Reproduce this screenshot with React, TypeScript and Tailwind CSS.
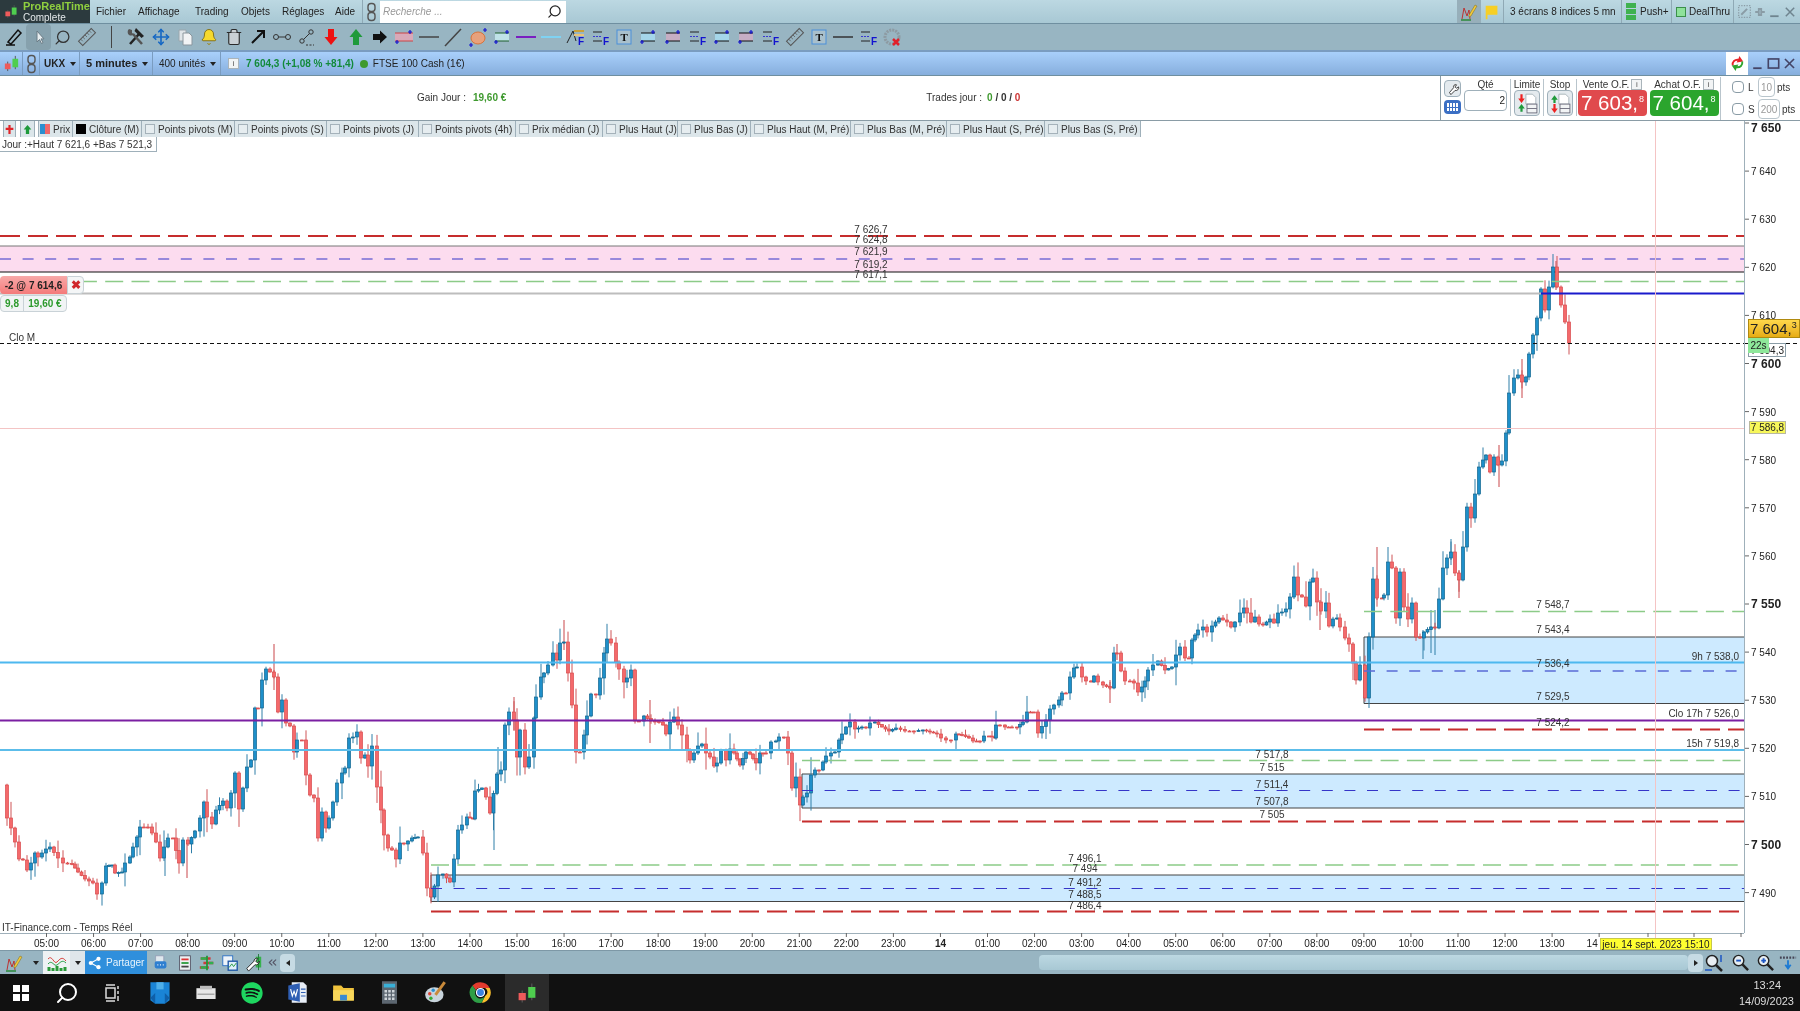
import type { ReactNode } from 'react'
import { Bell, ChevronsLeft, Move, Search, Trash2 } from 'lucide-react'
import { FaSpotify } from 'react-icons/fa'

// close of each candle, read off the chart as [x, y] in page pixels
const PATH: number[][] = [
  [3,785],[7,818],[11,828],[15,842],[19,859],[23,860],[27,870],[31,863],[35,853],[38,857],[46,849],[50,847],[58,858],[63,863],[72,864],[78,872],[85,879],[93,883],[97,894],[102,883],[106,866],[112,865],[115,873],[122,872],[125,863],[130,857],[133,847],[137,837],[140,827],[148,827],[152,833],[156,842],[160,858],[164,847],[168,838],[173,838],[179,863],[183,840],[188,844],[195,831],[200,818],[204,802],[207,817],[212,824],[216,810],[223,801],[227,808],[231,793],[235,773],[239,809],[243,788],[247,767],[251,760],[255,708],[258,708],[262,680],[266,669],[270,672],[274,677],[278,712],[282,700],[286,723],[290,726],[294,752],[297,740],[302,740],[306,775],[310,795],[314,798],[318,838],[322,812],[326,828],[329,818],[333,802],[337,783],[342,773],[345,768],[349,738],[353,737],[357,732],[361,758],[365,755],[368,766],[372,746],[377,787],[381,810],[384,835],[388,848],[392,850],[396,859],[400,843],[404,844],[412,838],[418,837],[423,853],[427,888],[431,897],[438,875],[443,874],[450,882],[454,859],[458,830],[462,825],[467,817],[473,819],[475,791],[482,788],[486,797],[490,813],[497,774],
  [501,770],[505,725],[509,712],[514,720],[517,757],[520,730],[525,767],[529,757],[534,718],[536,697],[541,677],[544,673],[548,665],[553,653],[557,660],[560,643],[564,642],[568,673],[572,705],[576,752],[580,752],[584,735],[587,716],[591,694],[596,695],[600,678],[604,653],[607,639],[611,643],[616,662],[619,669],[624,682],[627,678],[631,670],[635,721],[639,721],[644,716],[651,721],[659,722],[663,725],[666,734],[670,722],[674,717],[678,725],[682,735],[687,750],[690,760],[694,753],[698,746],[702,744],[706,753],[710,757],[714,766],[717,763],[721,750],[726,760],[730,749],[734,753],[740,765],[746,752],[750,754],[756,763],[760,753],[766,753],[771,742],[776,741],[779,737],[784,737],[788,753],[792,788],[796,777],[800,805],[803,797],[807,793],[811,775],[815,770],[819,770],[823,762],[826,756],[831,753],[835,752],[839,740],[842,734],[846,727],[850,722],[855,729],[862,727],[866,728],[870,723],[875,722],[882,727],[889,731],[896,728],[905,731],[914,731],[923,730],[937,734],[941,738],[946,740],[951,740],[956,734],[962,735],[969,738],[973,741],[980,741],[984,736],[989,736],[995,738],[996,725],[1000,725],[1005,727],[1012,727],[1017,727],[1023,722],[1027,712],[1034,712],[1038,733],
  [1046,720],[1050,709],[1054,705],[1059,700],[1062,693],[1066,693],[1070,677],[1074,668],[1077,667],[1082,677],[1086,681],[1091,682],[1094,676],[1098,682],[1103,685],[1110,688],[1114,653],[1117,653],[1121,671],[1125,681],[1130,681],[1134,683],[1138,692],[1142,687],[1145,681],[1148,670],[1153,665],[1158,661],[1165,670],[1172,667],[1176,655],[1180,647],[1185,658],[1189,658],[1192,640],[1198,630],[1203,627],[1207,632],[1212,626],[1219,618],[1227,622],[1231,627],[1235,622],[1240,613],[1244,608],[1247,613],[1251,622],[1255,617],[1259,624],[1263,625],[1270,619],[1274,623],[1278,613],[1282,612],[1286,609],[1290,597],[1294,577],[1298,595],[1302,597],[1306,606],[1310,582],[1313,578],[1317,602],[1321,611],[1326,603],[1329,626],[1333,619],[1337,618],[1340,627],[1345,638],[1349,644],[1353,663],[1356,680],[1360,665],[1365,698],[1369,637],[1373,579],[1377,598],[1382,598],[1384,595],[1388,562],[1392,568],[1396,618],[1400,572],[1404,607],[1408,619],[1412,603],[1416,637],[1420,638],[1424,632],[1431,627],[1435,628],[1439,599],[1443,568],[1447,558],[1451,552],[1455,573],[1459,580],[1463,547],[1467,507],[1471,518],[1475,494],[1479,467],[1483,460],[1486,455],[1490,472],[1494,457],[1498,465],[1502,461],[1506,433],[1509,393],[1514,378],[1518,375],[1522,382],[1526,377],[1529,354],[1533,335],[1537,318],[1541,289],[1545,310],[1549,287],[1553,267],[1557,287],[1561,305],[1565,322],[1569,343],
]

// the long wicks that stand out on the chart: x, y1, y2, red?
const WICKS: [number, number, number, boolean][] = [
  [274,644,690,true],[187,840,878,true],[165,840,876,false],[494,810,850,false],[498,747,790,false],[564,620,650,true],[514,697,730,true],[650,700,743,true],[1377,547,600,true],[1110,680,703,true],[1117,644,660,true],[1320,600,630,true],[1423,630,659,false],[1435,610,655,false],[1431,610,653,false],[1459,570,598,true],[1451,539,560,false],[1556,261,290,true],[1522,359,398,true],[1499,445,487,true],
]

const UP = '#1e8fca'
const DOWN = '#f4696b'

function rnd(i: number) {
  const v = Math.sin(i * 12.9898) * 43758.5453
  return v - Math.floor(v)
}

function buildCandles() {
  const out: { x: number; open: number; close: number; hi: number; lo: number }[] = []
  for (let p = 1; p < PATH.length; p++) {
    const [x0, y0] = PATH[p - 1]
    const [x1, y1] = PATH[p]
    const n = Math.max(1, Math.round((x1 - x0) / 3.92))
    for (let k = 1; k <= n; k++) {
      const open = y0 + ((y1 - y0) * (k - 1)) / n
      const close = y0 + ((y1 - y0) * k) / n
      const i = out.length
      const scale = 0.25 + Math.min(Math.abs(close - open) / 10, 1)
      out.push({
        x: x0 + ((x1 - x0) * k) / n,
        open,
        close,
        hi: Math.min(open, close) - (1 + rnd(i) * rnd(i) * 14) * scale,
        lo: Math.max(open, close) + (1 + rnd(i + 500) * rnd(i + 500) * 14) * scale,
      })
    }
  }
  return out
}

const candles = buildCandles()

const PRICES = [7650,7640,7630,7620,7610,7600,7590,7580,7570,7560,7550,7540,7530,7520,7510,7500,7490]
const HOURS = ['05:00','06:00','07:00','08:00','09:00','10:00','11:00','12:00','13:00','14:00','15:00','16:00','17:00','18:00','19:00','20:00','21:00','22:00','23:00','14','01:00','02:00','03:00','04:00','05:00','06:00','07:00','08:00','09:00','10:00','11:00','12:00','13:00','14']

const priceY = (p: number) => 604 + (7550 - p) * 4.81

const LABELS: [string, number, number][] = [
  ['7 626,7',871,229],['7 624,8',871,239],['7 621,9',871,251],['7 619,2',871,264],['7 617,1',871,274],
  ['7 548,7',1553,604],['7 543,4',1553,629],['7 536,4',1553,663],['7 529,5',1553,696],['7 524,2',1553,722],
  ['7 517,8',1272,754],['7 515',1272,767],['7 511,4',1272,784],['7 507,8',1272,801],['7 505',1272,814],
  ['7 496,1',1085,858],['7 494',1085,868],['7 491,2',1085,882],['7 488,5',1085,894],['7 486,4',1085,905],
]

function Dash({ x, y, color, w, dash }: { x: number; y: number; color: string; w: number; dash: string }) {
  return <line x1={x} x2={1744} y1={y} y2={y} stroke={color} strokeWidth={w} strokeDasharray={dash} />
}

function Box({ x, top, bottom, fill, edge }: { x: number; top: number; bottom: number; fill: string; edge?: string }) {
  return (
    <g>
      <rect x={x} y={top} width={1744 - x} height={bottom - top} fill={fill} />
      <line x1={x} x2={1744} y1={top} y2={top} stroke={edge ?? '#444'} strokeWidth={1} />
      <line x1={x} x2={1744} y1={bottom} y2={bottom} stroke={edge ?? '#444'} strokeWidth={1} />
    </g>
  )
}

function Chart() {
  return (
    <svg width={1800} height={829} viewBox="0 121 1800 829" className="block" fontFamily="'Liberation Sans', Arial, sans-serif">
      <rect x={0} y={121} width={1800} height={829} fill="#fff" />

      <rect x={0} y={246} width={1744} height={26} fill="#fcdcef" />
      <line x1={0} x2={1744} y1={246} y2={246} stroke="#777" />
      <line x1={0} x2={1744} y1={272} y2={272} stroke="#111" />
      <Box x={1364} top={637} bottom={703.5} fill="#cdeaff" />
      <Box x={802} top={774} bottom={808} fill="#cdeaff" />
      <Box x={431} top={875} bottom={901.5} fill="#cdeaff" />
      <line x1={1364} x2={1364} y1={637} y2={703.5} stroke="#444" />
      <line x1={802} x2={802} y1={774} y2={808} stroke="#444" />
      <line x1={431} x2={431} y1={875} y2={901.5} stroke="#444" />

      {WICKS.map(([x, a, b, red], i) => (
        <line key={i} x1={x} x2={x} y1={a} y2={b} stroke={red ? '#c9474a' : '#2f7ea8'} />
      ))}
      {candles.map((c, i) => {
        const up = c.close < c.open
        const top = Math.min(c.open, c.close)
        const h = Math.max(1, Math.abs(c.close - c.open))
        return (
          <g key={i}>
            <line x1={c.x} x2={c.x} y1={c.hi} y2={c.lo} stroke={up ? '#2f7ea8' : '#cf5557'} />
            <rect x={c.x - 1.5} y={top} width={3} height={h} fill={up ? UP : DOWN} stroke={up ? '#11668f' : '#d94a4c'} strokeWidth={0.7} />
          </g>
        )
      })}

      <Dash x={0} y={236} color="#c62d2d" w={2} dash="20 8" />
      <Dash x={0} y={259} color="#3535c8" w={1} dash="11 11.6" />
      <Dash x={0} y={281.5} color="#8ccb88" w={1.5} dash="18 8.3" />
      <line x1={0} x2={1541} y1={293.5} y2={293.5} stroke="#bdbdbd" strokeWidth={2} />
      <line x1={1541} x2={1744} y1={293.5} y2={293.5} stroke="#1a1acc" strokeWidth={2} />
      <Dash x={0} y={343.5} color="#111" w={1} dash="4 3" />
      <line x1={1744} x2={1800} y1={343.5} y2={343.5} stroke="#111" strokeDasharray="4 3" />

      <line x1={0} x2={1744} y1={662.5} y2={662.5} stroke="#4db8ef" strokeWidth={2} />
      <line x1={0} x2={1744} y1={720.5} y2={720.5} stroke="#7a1fa2" strokeWidth={2} />
      <line x1={0} x2={1744} y1={750} y2={750} stroke="#5cbdea" strokeWidth={2} />

      <Dash x={1364} y={611.5} color="#8ccb88" w={1.5} dash="18 8.3" />
      <Dash x={1364} y={671} color="#5a6bd6" w={1.5} dash="11 11.6" />
      <Dash x={1364} y={729.5} color="#c62d2d" w={2} dash="20 8" />
      <Dash x={802} y={760.5} color="#8ccb88" w={1.5} dash="18 8.3" />
      <Dash x={802} y={790.5} color="#3535c8" w={1} dash="11 11.6" />
      <Dash x={802} y={821.5} color="#c62d2d" w={2} dash="20 8" />
      <Dash x={431} y={865} color="#8ccb88" w={1.5} dash="18 8.3" />
      <Dash x={431} y={888.5} color="#3535c8" w={1} dash="11 11.6" />
      <Dash x={431} y={911.5} color="#c62d2d" w={2} dash="20 8" />

      <line x1={0} x2={1744} y1={428.5} y2={428.5} stroke="#f4c4c4" />
      <line x1={1655.5} x2={1655.5} y1={121} y2={950} stroke="#f4c4c4" />

      {LABELS.map(([t, x, y]) => (
        <text key={t} x={x} y={y + 3.5} textAnchor="middle" fontSize={10} fill="#333">{t}</text>
      ))}
      <text x={1739} y={659.5} textAnchor="end" fontSize={10} fill="#333">9h 7 538,0</text>
      <text x={1739} y={716.5} textAnchor="end" fontSize={10} fill="#333">Clo 17h 7 526,0</text>
      <text x={1739} y={746.5} textAnchor="end" fontSize={10} fill="#333">15h 7 519,8</text>
      <text x={9} y={341} fontSize={10} fill="#333">Clo M</text>
      <text x={2} y={931} fontSize={10} fill="#333">IT-Finance.com - Temps Réel</text>

      <line x1={1744.5} x2={1744.5} y1={121} y2={933} stroke="#9fb0ba" />
      <line x1={0} x2={1744} y1={933.5} y2={933.5} stroke="#9fb0ba" />
      {PRICES.map((p) => {
        const bold = p % 50 === 0
        const y = priceY(p)
        return (
          <g key={p}>
            <line x1={1745} x2={1749} y1={y} y2={y} stroke="#666" />
            <text x={1751} y={(p === 7650 ? 128 : y) + 4} fontSize={bold ? 12 : 10} fontWeight={bold ? 700 : 400} fill="#222">
              {String(p)[0]} {String(p).slice(1)}
            </text>
          </g>
        )
      })}

      {HOURS.map((h, i) => {
        const x = 46.5 + 47.05 * i
        const last = i === HOURS.length - 1
        return (
          <g key={i}>
            <line x1={x} x2={x} y1={933} y2={937} stroke="#666" />
            <text x={last ? x - 7 : x} y={947} textAnchor="middle" fontSize={10} fontWeight={h === '14' && !last ? 700 : 400} fill="#222">{h}</text>
          </g>
        )
      })}
      <line x1={1648} x2={1648} y1={933} y2={937} stroke="#666" />
      <line x1={1694} x2={1694} y1={933} y2={937} stroke="#666" />
      <line x1={1741} x2={1741} y1={933} y2={937} stroke="#666" />
    </svg>
  )
}

function Ico({ children, size = 20 }: { children: ReactNode; size?: number }) {
  return <svg width={size} height={size} viewBox="0 0 20 20" fill="none">{children}</svg>
}

const Plus = ({ x, y }: { x: number; y: number }) => (
  <path d={`M${x - 2} ${y}h4M${x} ${y - 2}v4`} stroke="#1212d0" strokeWidth={1.2} />
)
const F = () => <text x={13} y={18} fontSize={10} fontWeight={700} fill="#1212d0" fontFamily="'Liberation Sans', sans-serif">F</text>
const T = () => (
  <>
    <rect x={3} y={3} width={14} height={14} fill="#a9c0cc" stroke="#4a90d9" />
    <text x={6.5} y={14} fontSize={11} fontWeight={700} fill="#111" fontFamily="'Liberation Serif', serif">T</text>
  </>
)
const Channel = ({ fill, edge }: { fill: string; edge: string }) => (
  <>
    <rect x={3} y={6} width={14} height={8} fill={fill} />
    <path d="M3 6h14M3 14h14" stroke={edge} strokeWidth={1.2} />
    <Plus x={15} y={5} />
    <Plus x={4} y={15} />
  </>
)
const Lines = () => (
  <>
    <path d="M3 5h9M3 14h9" stroke="#222" strokeWidth={1.2} />
    <path d="M3 9.5h9" stroke="#3a3ad0" strokeWidth={1.2} strokeDasharray="2 1" />
    <F />
  </>
)
const Ruler = () => (
  <g transform="rotate(-45 10 10)">
    <rect x={1} y={7} width={18} height={6} fill="none" stroke="#555" />
    <path d="M4 7v3M7 7v3M10 7v3M13 7v3M16 7v3" stroke="#555" strokeWidth={0.7} />
  </g>
)

const TOOLS: ReactNode[] = [
  <Ico key="a"><path d="M4 15 14 3l3 3L7 17zM2 18h9" stroke="#111" strokeWidth={1.5} /></Ico>,
  <Ico key="b"><path d="M8 4v11l2.5-2.5 2 4 1.5-.8-2-3.8H15z" fill="#e8eef0" stroke="#6b7c86" /></Ico>,
  <Search key="c" size={17} color="#333" strokeWidth={1.8} className="-scale-x-100" />,
  <Ico key="d"><Ruler /></Ico>,
  <div key="e" className="h-[22px] w-px bg-[#444]" />,
  <Ico key="f">
    <path d="m4 17 9-10" stroke="#222" strokeWidth={2.5} />
    <path d="m10 1 8 8-2.500 2-7-7z" fill="#222" />
    <path d="m16 17-9-10" stroke="#555" strokeWidth={2.500} />
    <path d="M3 2a4 4 0 0 0 0 6 4 4 0 0 0 5-1L6 6V3z" fill="#555" />
  </Ico>,
  <Move key="g" size={18} color="#1668c4" strokeWidth={2.2} />,
  <Ico key="h"><path d="M4 3h7v11H4z" fill="#dfe5e8" stroke="#9aa6ad" /><path d="M8 6h6l3 3v9H8z" fill="#f2f4f5" stroke="#8a969d" /></Ico>,
  <Bell key="i" size={18} color="#7d6a12" fill="#f6d92e" strokeWidth={1.2} />,
  <Trash2 key="j" size={18} color="#2a2a2a" fill="#c9d0d4" strokeWidth={1.5} />,
  <Ico key="k"><path d="M4 16 15 5M9 4h7v7" stroke="#111" strokeWidth={2} /></Ico>,
  <Ico key="l"><circle cx={4} cy={10} r={2.5} stroke="#333" /><circle cx={16} cy={10} r={2.5} stroke="#333" /><path d="M6.5 10h7" stroke="#333" /></Ico>,
  <Ico key="m"><circle cx={14} cy={5} r={2.2} stroke="#333" /><circle cx={5} cy={14} r={2.2} stroke="#333" /><path d="m6.5 12.5 6-6" stroke="#333" /><path d="M9 18h8" stroke="#333" strokeDasharray="2 1.5" /></Ico>,
  <Ico key="n"><path d="M7 2h6v8h3.5L10 18 3.5 10H7z" fill="#ee1111" /></Ico>,
  <Ico key="o"><path d="M10 2l6.5 8H13v8H7v-8H3.500z" fill="#1f9a3a" /></Ico>,
  <Ico key="p"><path d="M3 7h7V3.500l7 6.500-7 6.500V13H3z" fill="#111" /></Ico>,
  <Ico key="q"><rect x={1} y={6} width={18} height={8} fill="#d9a9b8" /><path d="M1 6h18M1 14h18" stroke="#c44" /><Plus x={16} y={5} /><Plus x={3} y={15} /></Ico>,
  <Ico key="r"><path d="M0 10h20" stroke="#444" strokeWidth={1.5} /></Ico>,
  <Ico key="s"><path d="M2 19 18 2" stroke="#444" strokeWidth={1.5} /></Ico>,
  <Ico key="t"><ellipse cx={10} cy={11} rx={7} ry={6} fill="#e8a17c" stroke="#d9733a" /><Plus x={17} y={3} /><Plus x={3} y={18} /></Ico>,
  <Ico key="u"><Channel fill="#bfe2e8" edge="#1d5e2a" /></Ico>,
  <Ico key="v"><path d="M0 10h20" stroke="#7a1fc0" strokeWidth={2} /></Ico>,
  <Ico key="w"><path d="M0 10h20" stroke="#7fd2f2" strokeWidth={2} /></Ico>,
  <Ico key="x"><path d="M2 16 8 4l3 10" stroke="#222" /><path d="M9 4h10" stroke="#c9a13a" strokeWidth={2} /><path d="M9 8h10" stroke="#e8c27a" strokeWidth={2} /><F /></Ico>,
  <Ico key="y"><Lines /></Ico>,
  <Ico key="z"><T /></Ico>,
  <Ico key="a1"><Channel fill="#a5d6ea" edge="#111" /></Ico>,
  <Ico key="a2"><Channel fill="#c6aec4" edge="#111" /></Ico>,
  <Ico key="a3"><Lines /></Ico>,
  <Ico key="a4"><Channel fill="#a5d6ea" edge="#111" /></Ico>,
  <Ico key="a5"><Channel fill="#c6aec4" edge="#111" /></Ico>,
  <Ico key="a6"><Lines /></Ico>,
  <Ico key="a7"><Ruler /></Ico>,
  <Ico key="a8"><T /></Ico>,
  <Ico key="a9"><path d="M0 10h20" stroke="#333" strokeWidth={1.5} /></Ico>,
  <Ico key="a10"><Lines /></Ico>,
  <Ico key="a11"><circle cx={10} cy={10} r={7} stroke="#8d9aa2" strokeWidth={3} strokeDasharray="2 1" /><path d="m11 12 6 6m0-6-6 6" stroke="#e0202a" strokeWidth={2.5} /></Ico>,
]

const Candles = ({ size = 20 }: { size?: number }) => (
  <svg width={size} height={size} viewBox="0 0 20 20">
    <path d="M6 8v10M14 2v14" stroke="#555" strokeWidth={1} />
    <rect x={3} y={10} width={6} height={6} fill="#ef5b5b" />
    <rect x={11} y={5} width={6} height={9} fill="#4fce4f" />
  </svg>
)

const Chain = () => (
  <svg width={11} height={20} viewBox="0 0 11 20" fill="none">
    <rect x={2} y={1.500} width={7} height={8} rx={3} stroke="#555" strokeWidth={1.4} />
    <rect x={2} y={10.500} width={7} height={8} rx={3} stroke="#555" strokeWidth={1.4} />
  </svg>
)

const Caret = () => (
  <span className="inline-block h-0 w-0 border-x-[3px] border-t-[4px] border-x-transparent border-t-[#222]" />
)

const InfoIcon = () => (
  <span className="flex h-[11px] w-[11px] items-center justify-center border border-[#aab4ba] bg-[#f2f4f5] text-[8px] leading-none text-[#555]">i</span>
)

function MenuBar() {
  return (
    <div className="flex h-[24px] shrink-0 items-center border-b border-[#6f8fa0] bg-gradient-to-b from-[#bcd8e2] to-[#a8c8d4] text-[10px] text-[#222]">
      <div className="flex h-full w-[90px] items-center gap-[4px] bg-[#2c3a3e] pl-[3px]">
        <Candles size={17} />
        <div className="leading-[11px]">
          <div className="text-[11px] font-bold text-[#8fcf3f]">ProRealTime</div>
          <div className="text-[10px] text-[#e3e8ea]">Complete</div>
        </div>
      </div>
      <span className="ml-[6px] w-[42px]">Fichier</span>
      <span className="w-[57px]">Affichage</span>
      <span className="w-[46px]">Trading</span>
      <span className="w-[41px]">Objets</span>
      <span className="w-[53px]">Réglages</span>
      <span className="w-[27px]">Aide</span>
      <div className="flex h-full w-[18px] items-center justify-center border-l border-[#8fa9b5]"><Chain /></div>
      <div className="flex h-[22px] w-[186px] items-center justify-between bg-white pl-[3px] pr-[4px]">
        <span className="italic text-[#999]">Recherche ...</span>
        <Search size={15} color="#222" className="-scale-x-100" />
      </div>
      <div className="flex-1" />
      <div className="flex h-full w-[24px] items-center justify-center bg-[#97afba]">
        <Ico size={20}><path d="M3 17 5 6l3 8 2-6 1 9" stroke="#b33" /><path d="m10 13 6-10 2 1-6 10-2 1z" fill="#f2c93a" stroke="#7a6a20" strokeWidth={0.5} /><path d="M2 18h10" stroke="#2a8a3a" strokeWidth={1.5} /></Ico>
      </div>
      <div className="flex h-full w-[23px] items-center justify-center border-r border-[#8fa9b5]">
        <Ico size={18}><path d="M3 3h13v10H5v5H3z" fill="#f7cf25" /></Ico>
      </div>
      <span className="w-[118px] border-r border-[#8fa9b5] pl-[6px] leading-[23px]">3 écrans 8 indices 5 mn</span>
      <div className="flex h-full w-[50px] items-center gap-[4px] border-r border-[#8fa9b5] pl-[4px]">
        <span className="flex h-[18px] w-[10px] flex-col gap-px">
          <span className="flex-1 bg-[#3fb24f]" /><span className="flex-1 bg-[#3fb24f]" /><span className="flex-1 bg-[#3fb24f]" />
        </span>
        Push+
      </div>
      <div className="flex h-full w-[62px] items-center gap-[3px] border-r border-[#8fa9b5] pl-[4px]">
        <span className="h-[10px] w-[10px] border border-[#3b8f4a] bg-[#8ee29a]" />
        DealThru
      </div>
      <div className="flex w-[66px] items-center justify-around px-[2px]">
        <Ico size={13}><rect x={1} y={1} width={18} height={18} stroke="#8a9ca6" strokeDasharray="2 2" strokeWidth={2} /><path d="m5 15 9-9" stroke="#8a9ca6" strokeWidth={3} /></Ico>
        <Ico size={12}><path d="M2 10h6M8 5h4v10H8zM12 10h6" stroke="#8a9ca6" strokeWidth={3} /></Ico>
        <Ico size={12}><path d="M2 17h14" stroke="#6f848f" strokeWidth={3} /></Ico>
        <Ico size={12}><path d="m3 3 14 14M17 3 3 17" stroke="#6f848f" strokeWidth={2.5} /></Ico>
      </div>
    </div>
  )
}

function ToolBar() {
  return (
    <div className="flex h-[28px] shrink-0 items-center border-b-2 border-[#7a9cc0] bg-[#98b5c2] pl-[2px]">
      {TOOLS.map((t, i) => (
        <div key={i} className={`flex h-[26px] w-[24.4px] shrink-0 items-center justify-center ${i === 1 ? 'rounded-sm bg-[#86a1ad]' : ''}`}>
          {t}
        </div>
      ))}
    </div>
  )
}

function SymbolBar() {
  return (
    <div className="flex h-[24px] shrink-0 items-center border-b border-[#6f8fa0] bg-gradient-to-b from-[#a9d0fb] to-[#86aedd] text-[10px] text-[#222]">
      <div className="flex h-full w-[23px] items-center justify-center border-r border-[#7a9cc0]"><Candles size={19} /></div>
      <div className="flex h-full w-[17px] items-center justify-center border-r border-[#7a9cc0]"><Chain /></div>
      <div className="flex h-full w-[40px] items-center gap-[5px] border-r border-[#7a9cc0] pl-[4px] text-[10px] font-bold">UKX <Caret /></div>
      <div className="flex h-full w-[73px] items-center gap-[5px] border-r border-[#7a9cc0] pl-[6px] text-[11px] font-bold">5 minutes <Caret /></div>
      <div className="flex h-full w-[68px] items-center gap-[5px] border-r border-[#7a9cc0] pl-[6px]">400 unités <Caret /></div>
      <div className="ml-[7px]"><InfoIcon /></div>
      <span className="ml-[7px] font-bold text-[#138a3a]">7 604,3 (+1,08 % +81,4)</span>
      <span className="ml-[6px] h-[8px] w-[8px] rounded-full bg-[#3f9a2f]" />
      <span className="ml-[5px]">FTSE 100 Cash (1€)</span>
      <div className="flex-1" />
      <div className="flex h-full w-[22px] items-center justify-center bg-white">
        <Ico size={19}>
          <path d="M4 12a6 6 0 0 1 7-7l1-3 4 6-7 1 1-2a4 4 0 0 0-4 5z" fill="#e8262a" />
          <path d="M16 8a6 6 0 0 1-7 7l-1 3-4-6 7-1-1 2a4 4 0 0 0 4-5z" fill="#2fa52f" />
        </Ico>
      </div>
      <div className="flex w-[52px] items-center justify-around px-[3px]">
        <Ico size={12}><path d="M2 17h14" stroke="#446" strokeWidth={3} /></Ico>
        <Ico size={13}><rect x={2} y={3} width={16} height={14} stroke="#446" strokeWidth={2.5} /></Ico>
        <Ico size={13}><path d="m3 3 14 14M17 3 3 17" stroke="#446" strokeWidth={2.5} /></Ico>
      </div>
    </div>
  )
}

const OrderIcon = ({ flip }: { flip?: boolean }) => (
  <div className="flex h-[26px] w-[26px] items-center justify-center rounded-sm border border-[#9fb0ba] bg-[#e4eaee]">
    <Ico size={22}>
      <path d="M9 2h6l3 3v6H9z" fill="#fff" stroke="#9aa6ad" strokeWidth={0.7} />
      <rect x={10} y={11} width={9} height={8} fill="#f2f4f5" stroke="#667" strokeWidth={0.8} />
      <path d="M10 15h9" stroke="#667" strokeWidth={0.8} />
      <path d={flip ? 'M2 7l3-4 3 4H6v3H4V7z' : 'M4 2h2v4h2l-3 4-3-4h2z'} fill={flip ? '#1f9a3a' : '#e22'} />
      <path d={flip ? 'M4 11h2v4h2l-3 4-3-4h2z' : 'M2 15l3-4 3 4H6v3H4v-3z'} fill={flip ? '#e22' : '#1f9a3a'} />
    </Ico>
  </div>
)

const PriceButton = ({ price, cents, color }: { price: string; cents: string; color: string }) => (
  <div className={`flex h-[26px] w-[69px] items-center justify-center whitespace-nowrap rounded-sm text-white ${color}`}>
    <span className="text-[20.5px] leading-none">{price}</span>
    <span className="-mt-[8px] ml-px text-[9px] leading-none">{cents}</span>
  </div>
)

function InfoRow() {
  return (
    <div className="flex h-[45px] shrink-0 bg-white text-[10px] text-[#333]">
      <div className="flex flex-1 items-center pb-[2px] pl-[417px]">
        <span>Gain Jour :</span>
        <span className="ml-[7px] font-bold text-[#3f9a2f]">19,60 €</span>
        <span className="ml-[420px]">Trades jour :</span>
        <span className="ml-[5px] font-bold">
          <span className="text-[#3f9a2f]">0</span> / 0 / <span className="text-[#c33]">0</span>
        </span>
      </div>
      <div className="flex w-[360px] items-start border-l border-[#8a9ca6] pl-[3px] pt-[3px]">
        <div className="mt-px flex w-[18px] flex-col gap-[3px]">
          <div className="flex h-[17px] w-[17px] items-center justify-center rounded-sm border border-[#9fb0ba] bg-[#e4eaee]">
            <Ico size={14}><path d="m5 15 6-7a3 3 0 0 1 4-4l-2 3 2 2 3-2a4 4 0 0 1-5 5l-6 6z" fill="#fff" stroke="#222" strokeWidth={1.2} /></Ico>
          </div>
          <div className="grid h-[14px] w-[17px] grid-cols-4 gap-px rounded-sm bg-[#3b6fc4] p-[3px]">
            <span className="bg-white" /><span className="bg-white" /><span className="bg-white" /><span className="bg-white" />
            <span className="bg-white" /><span className="bg-white" /><span className="bg-white" /><span className="bg-white" />
          </div>
        </div>
        <div className="flex w-[47px] flex-col items-center">
          <span className="leading-[11px]">Qté</span>
          <div className="h-[21px] w-[43px] rounded-sm border border-[#9fb0ba] pr-[1px] text-right leading-[19px] text-[#222]">2</div>
        </div>
        <div className="ml-px flex w-[33px] flex-col items-center border-l border-[#b9c5cc]">
          <span className="leading-[11px]">Limite</span>
          <OrderIcon />
        </div>
        <div className="flex w-[33px] flex-col items-center border-l border-[#b9c5cc]">
          <span className="leading-[11px]">Stop</span>
          <OrderIcon flip />
        </div>
        <div className="flex w-[72px] flex-col items-center border-l border-[#b9c5cc]">
          <span className="flex items-center gap-[2px] leading-[11px]">Vente O.F. <InfoIcon /></span>
          <PriceButton price="7 603," cents="8" color="bg-[#e04a4d]" />
        </div>
        <div className="flex w-[72px] flex-col items-center">
          <span className="flex items-center gap-[2px] leading-[11px]">Achat O.F. <InfoIcon /></span>
          <PriceButton price="7 604," cents="8" color="bg-[#2ba52d]" />
        </div>
        <div className="-mt-[2px] flex flex-col gap-[2px] self-stretch border-l border-[#b9c5cc] pl-[11px]">
          <div className="flex h-[20px] items-center">
            <span className="h-[12px] w-[12px] rounded-sm border border-[#8a9ca6]" />
            <span className="ml-[4px] w-[10px]">L</span>
            <span className="flex h-[20px] w-[17px] items-center justify-center rounded-sm border border-[#b9c5cc] text-[#999]">10</span>
            <span className="ml-[2px]">pts</span>
          </div>
          <div className="flex h-[20px] items-center">
            <span className="h-[12px] w-[12px] rounded-sm border border-[#8a9ca6]" />
            <span className="ml-[4px] w-[10px]">S</span>
            <span className="flex h-[20px] w-[22px] items-center justify-center rounded-sm border border-[#b9c5cc] text-[#999]">200</span>
            <span className="ml-[2px]">pts</span>
          </div>
        </div>
      </div>
    </div>
  )
}

const LEGEND: [string, string][] = [
  ['Points pivots (M)', 'w-[93px]'],
  ['Points pivots (S)', 'w-[92px]'],
  ['Points pivots (J)', 'w-[92px]'],
  ['Points pivots (4h)', 'w-[97px]'],
  ['Prix médian (J)', 'w-[87px]'],
  ['Plus Haut (J)', 'w-[75px]'],
  ['Plus Bas (J)', 'w-[73px]'],
  ['Plus Haut (M, Pré)', 'w-[100px]'],
  ['Plus Bas (M, Pré)', 'w-[96px]'],
  ['Plus Haut (S, Pré)', 'w-[98px]'],
  ['Plus Bas (S, Pré)', 'w-[96px]'],
]

function Legend() {
  const cell = 'flex h-[16px] shrink-0 items-center whitespace-nowrap border-r border-[#9fb0ba] bg-[#dce6ea]'
  return (
    <div className="absolute -top-px left-0 flex w-full border-t border-[#8a9ca6] pl-[3px] text-[10px] text-[#333]">
      <div className={`${cell} w-[13px] justify-center border-l`}>
        <Ico size={11}><path d="M8 2h4v5h5v4h-5v7H8v-7H3V7h5z" fill="#e0262a" /></Ico>
      </div>
      <div className={`${cell} ml-[4px] w-[15px] justify-center border-l`}>
        <Ico size={11}><path d="M10 2l7 8h-4v8H7v-8H3z" fill="#1f9a3a" /></Ico>
      </div>
      <div className={`${cell} ml-[3px] w-[35px] border-l pl-[1px]`}>
        <span className="h-[10px] w-[5px] bg-[#2b8fd0]" />
        <span className="mr-[3px] h-[10px] w-[5px] bg-[#f0686a]" />
        Prix
      </div>
      <div className={`${cell} w-[69px] gap-[3px] pl-[3px]`}>
        <span className="h-[10px] w-[10px] bg-black" />
        Clôture (M)
      </div>
      {LEGEND.map(([label, w]) => (
        <div key={label} className={`${cell} ${w} gap-[3px] pl-[3px]`}>
          <span className="h-[10px] w-[10px] border border-[#a5b2ba] bg-[#e6edf0]" />
          {label}
        </div>
      ))}
    </div>
  )
}

function ChartArea() {
  return (
    <div className="relative h-[829px] shrink-0 text-[10px] text-[#222]">
      <Chart />
      <Legend />
      <div className="absolute left-0 top-[16px] flex h-[15px] w-[157px] items-center border-b border-r border-[#9fb0ba] bg-white pl-[2px] text-[#333]">
        Jour :+Haut 7 621,6 +Bas 7 521,3
      </div>

      <div className="absolute left-0 top-[155px] flex h-[18px] font-bold">
        <div className="flex w-[67px] items-center justify-center rounded-l-sm bg-gradient-to-b from-[#f7a9a9] to-[#f47a7a] text-[#222]">-2 @ 7 614,6</div>
        <div className="flex w-[17px] items-center justify-center rounded-r-sm border border-[#c9d2d7] bg-[#f4f6f7] text-[12px] leading-none text-[#d0282c]">✖</div>
      </div>
      <div className="absolute left-0 top-[174px] flex h-[17px] rounded-sm border border-[#c9d2d7] bg-[#f1f4f5] font-bold text-[#2c9a2c]">
        <div className="flex w-[23px] items-center justify-center border-r border-[#c9d2d7]">9,8</div>
        <div className="flex w-[42px] items-center justify-center">19,60 €</div>
      </div>

      <div className="absolute left-[1748px] top-[198px] flex h-[19px] w-[52px] items-center whitespace-nowrap border border-[#b08a10] bg-gradient-to-b from-[#ffd84a] to-[#e6ac12] pl-[1px] text-[15px] leading-none text-[#222]">
        7 604,<span className="-mt-[6px] text-[9px]">3</span>
      </div>
      <div className="absolute left-[1748px] top-[222px] flex h-[14px] w-[38px] items-center justify-end whitespace-nowrap border border-[#8a9ca6] bg-white pr-px">7 604,3</div>
      <div className="absolute left-[1748px] top-[217px] flex h-[15px] w-[21px] items-center justify-center bg-[#8ee89a]">22s</div>
      <div className="absolute left-[1749px] top-[300px] flex h-[13px] w-[37px] items-center justify-center whitespace-nowrap border border-[#b8b8a0] bg-[#f7f75a]">7 586,8</div>
      <div className="absolute left-[1600px] top-[817px] flex h-[12px] w-[112px] items-center justify-center whitespace-nowrap border border-[#c8c84a] bg-[#ffff30]">jeu. 14 sept. 2023 15:10</div>
    </div>
  )
}

function BottomBar() {
  return (
    <div className="flex h-[24px] shrink-0 items-center border-t border-[#7d98a6] bg-[#98b5c2] text-[10px]">
      <div className="flex w-[28px] justify-center">
        <Ico size={20}><path d="M3 17 5 6l3 8 2-6 1 9" stroke="#b33" /><path d="m10 13 6-10 2 1-6 10-2 1z" fill="#f2c93a" stroke="#7a6a20" strokeWidth={0.5} /><path d="M2 18h10" stroke="#2a8a3a" strokeWidth={1.5} /></Ico>
      </div>
      <div className="flex w-[15px] justify-center"><Caret /></div>
      <div className="flex h-full w-[27px] items-center justify-center bg-[#eef2f4]">
        <Ico size={20}><path d="M1 6c4-5 6 6 9 3s5-6 9-1" stroke="#d8403a" /><path d="M1 11c4-5 6 3 9 1s5-6 9-2" stroke="#2aa04a" /><path d="M2 18v-4M6 18v-3M10 18v-5M14 18v-3M18 18v-4" stroke="#2a9a3a" strokeWidth={3} /></Ico>
      </div>
      <div className="flex h-full w-[15px] items-center justify-center bg-[#dfe6ea]"><Caret /></div>
      <div className="flex h-full w-[62px] items-center gap-[4px] bg-[#2f8fdc] pl-[3px] text-[#e8f3fb]">
        <Ico size={14}><circle cx={15} cy={4} r={3} fill="#fff" /><circle cx={15} cy={16} r={3} fill="#fff" /><circle cx={4} cy={10} r={3} fill="#fff" /><path d="M15 4 4 10l11 6" stroke="#fff" strokeWidth={1.5} /></Ico>
        Partager
      </div>
      <div className="flex w-[24px] justify-center pl-[4px]">
        <Ico size={18}><path d="M4 2h9v8H4z" fill="#dfe8ee" stroke="#88a" strokeWidth={0.6} /><rect x={3} y={8} width={13} height={8} rx={2} fill="#2f7fd0" /><path d="M6 12h1M9 12h1M12 12h1" stroke="#fff" strokeWidth={1.5} /></Ico>
      </div>
      <div className="flex w-[24px] justify-center pl-[4px]">
        <Ico size={18}><rect x={4} y={2} width={12} height={16} fill="#eef2f4" stroke="#556" /><path d="M6 6h8" stroke="#d33" strokeWidth={2} /><path d="M6 10h8" stroke="#2a9a3a" strokeWidth={2} /><path d="M6 14h8" stroke="#444" strokeWidth={2} /></Ico>
      </div>
      <div className="flex w-[23px] justify-center">
        <Ico size={18}><path d="M3 5h11M6 10h11M2 15h10" stroke="#d03a3a" strokeWidth={3} /><path d="M10 2v16" stroke="#1f9a3a" strokeWidth={2} /><path d="M3 5h6M12 10h5M3 15h6" stroke="#2fb04f" strokeWidth={3} /></Ico>
      </div>
      <div className="flex w-[24px] justify-center">
        <Ico size={18}><rect x={2} y={2} width={11} height={11} fill="#eef4fa" stroke="#2a6fc4" /><rect x={8} y={8} width={10} height={10} fill="#dfeefa" stroke="#1c56a4" strokeWidth={1.5} /><path d="M9 15l3-4 2 3 3-4" stroke="#1f9a3a" /></Ico>
      </div>
      <div className="flex w-[24px] justify-center">
        <Ico size={18}><rect x={12} y={3} width={6} height={12} fill="#37b24d" /><path d="M15 0v18" stroke="#1f7a35" /><path d="m2 16 8-8a3 3 0 0 1 4-3l-2 3 2 2 2-2a4 4 0 0 1-5 4l-7 7z" fill="#fff" stroke="#222" /></Ico>
      </div>
      <ChevronsLeft size={13} color="#556" />
      <div className="ml-px flex h-[18px] w-[15px] items-center justify-center rounded-sm bg-[#c6dbe4]">
        <span className="h-0 w-0 border-y-[3px] border-r-[4px] border-y-transparent border-r-[#222]" />
      </div>
      <div className="flex h-[15px] flex-1">
        <div className="w-[744px] bg-[#98b5c2]" />
        <div className="flex-1 rounded-sm bg-gradient-to-b from-[#bcd8e2] to-[#a8c8d4]" />
      </div>
      <div className="flex h-[18px] w-[15px] items-center justify-center rounded-sm bg-[#c6dbe4]">
        <span className="h-0 w-0 border-y-[3px] border-l-[4px] border-y-transparent border-l-[#222]" />
      </div>
      <div className="flex w-[97px] items-center pl-[1px]">
        <Ico size={20}><circle cx={8} cy={8} r={5.500} fill="#e8eef2" stroke="#222" strokeWidth={1.500} /><path d="m12 12 6 6" stroke="#222" strokeWidth={2.500} /><path d="M1 17h7M17 2v7" stroke="#1c56c4" strokeWidth={1.500} /></Ico>
        <span className="ml-[7px]"><Ico size={19}><circle cx={8} cy={8} r={5.500} fill="#e8eef2" stroke="#222" strokeWidth={1.500} /><path d="m12 12 6 6" stroke="#222" strokeWidth={2.500} /><path d="M5.500 8h5" stroke="#1c56c4" strokeWidth={2} /></Ico></span>
        <span className="ml-[6px]"><Ico size={19}><circle cx={8} cy={8} r={5.500} fill="#e8eef2" stroke="#222" strokeWidth={1.500} /><path d="m12 12 6 6" stroke="#222" strokeWidth={2.500} /><path d="M5.500 8h5M8 5.500v5" stroke="#1c56c4" strokeWidth={2} /></Ico></span>
        <span className="ml-[4px]"><Ico size={18}><path d="M1 4h18" stroke="#445" strokeWidth={2.500} strokeDasharray="2 1.500" /><path d="M10 7v8M7 12l3 4 3-4" stroke="#1c7ad4" strokeWidth={2} /></Ico></span>
      </div>
    </div>
  )
}

function TaskBar() {
  const slot = 'flex w-[45.8px] shrink-0 items-center justify-center'
  return (
    <div className="flex h-[37px] shrink-0 items-center bg-[#111]">
      <div className={`${slot} -ml-[2px]`}>
        <div className="grid h-[16px] w-[16px] grid-cols-2 gap-[2px]">
          <span className="bg-white" /><span className="bg-white" /><span className="bg-white" /><span className="bg-white" />
        </div>
      </div>
      <div className={slot}><Search size={24} color="#fff" className="-scale-x-100" strokeWidth={2} /></div>
      <div className={slot}>
        <Ico size={20}><rect x={4} y={5} width={9} height={10} stroke="#ddd" strokeWidth={1.500} /><path d="M4 2h9M4 18h9" stroke="#ddd" strokeWidth={1.500} /><path d="M16 3v3M16 8v3M16 13v5" stroke="#ddd" strokeWidth={1.500} /></Ico>
      </div>
      <div className={`${slot} ml-[2px]`}>
        <Ico size={24}><path d="M2 1h16v15l-4 3H6l-4-3z" fill="#1a84d6" /><path d="M7 1h6v6H7z" fill="#4fb0ea" /><path d="M2 14l4 5V10zM18 14l-4 5V10z" fill="#0f5fa8" /></Ico>
      </div>
      <div className={slot}>
        <Ico size={24}><path d="M2 6h16v9H2z" fill="#e6e6e6" /><path d="M5 4h10v3H5z" fill="#bbb" /><path d="M3 11h14" stroke="#999" /></Ico>
      </div>
      <div className={slot}><FaSpotify size={22} color="#1ed760" /></div>
      <div className={slot}>
        <Ico size={23}>
          <path d="M5 1h10l3 3v15H5z" fill="#e8eef6" />
          <path d="M2 4l10-2v16L2 16z" fill="#2f5fb4" />
          <path d="M13 7h4M13 10h4M13 13h4" stroke="#2f5fb4" />
          <path d="M4 7l1.500 6 1.500-4 1.500 4 1.500-6" stroke="#fff" strokeWidth={1} />
        </Ico>
      </div>
      <div className={slot}>
        <Ico size={23}><path d="M1 4h7l2 2h9v11H1z" fill="#f0c33c" /><path d="M1 8h18v9H1z" fill="#f8d75a" /><rect x={7} y={12} width={6} height={5} fill="#3a8ad0" /></Ico>
      </div>
      <div className={slot}>
        <Ico size={25}><rect x={4} y={1} width={12} height={18} fill="#5c6670" /><rect x={5.500} y={3} width={9} height={3} fill="#38b0d8" /><path d="M6 9h2M9 9h2M12 9h2M6 12h2M9 12h2M12 12h2M6 15h2M9 15h2M12 15h2" stroke="#cfd5da" strokeWidth={2} /></Ico>
      </div>
      <div className={slot}>
        <Ico size={23}><ellipse cx={9} cy={12} rx={8} ry={6.500} fill="#c9d4dc" /><circle cx={5} cy={11} r={1.500} fill="#d43" /><circle cx={8} cy={8} r={1.500} fill="#2a8fd0" /><circle cx={6} cy={15} r={1.500} fill="#3a3" /><path d="m10 12 8-11" stroke="#c98a3a" strokeWidth={2.500} /></Ico>
      </div>
      <div className={slot}>
        <svg width={23} height={23} viewBox="0 0 20 20">
          <path d="M10 1a9 9 0 0 1 8 5h-8a4 4 0 0 0-4 2L3 4a9 9 0 0 1 7-3z" fill="#e33b2e" />
          <path d="M18 6a9 9 0 0 1-7 13l3-6a4 4 0 0 0 0-7z" fill="#fbc02d" />
          <path d="M3 4a9 9 0 0 0 8 15l3-6a4 4 0 0 1-8-5z" fill="#2e9e46" />
          <circle cx={10} cy={10} r={3.500} fill="#3b82e0" stroke="#fff" />
        </svg>
      </div>
      <div className="ml-[1px] flex h-full w-[44px] shrink-0 items-center justify-center bg-[#2b2b2b]">
        <Candles size={24} />
      </div>
      <div className="flex-1" />
      <div className="pr-[6px] text-right text-[11px] leading-[16px] text-[#dddddd]">
        <div className="pr-[13px]">13:24</div>
        <div>14/09/2023</div>
      </div>
    </div>
  )
}

export default function App() {
  return (
    <div className="flex h-[1011px] w-[1800px] flex-col overflow-hidden bg-white font-['Liberation_Sans',Arial,sans-serif] blur-[0.35px]">
      <MenuBar />
      <ToolBar />
      <SymbolBar />
      <InfoRow />
      <ChartArea />
      <BottomBar />
      <TaskBar />
    </div>
  )
}
